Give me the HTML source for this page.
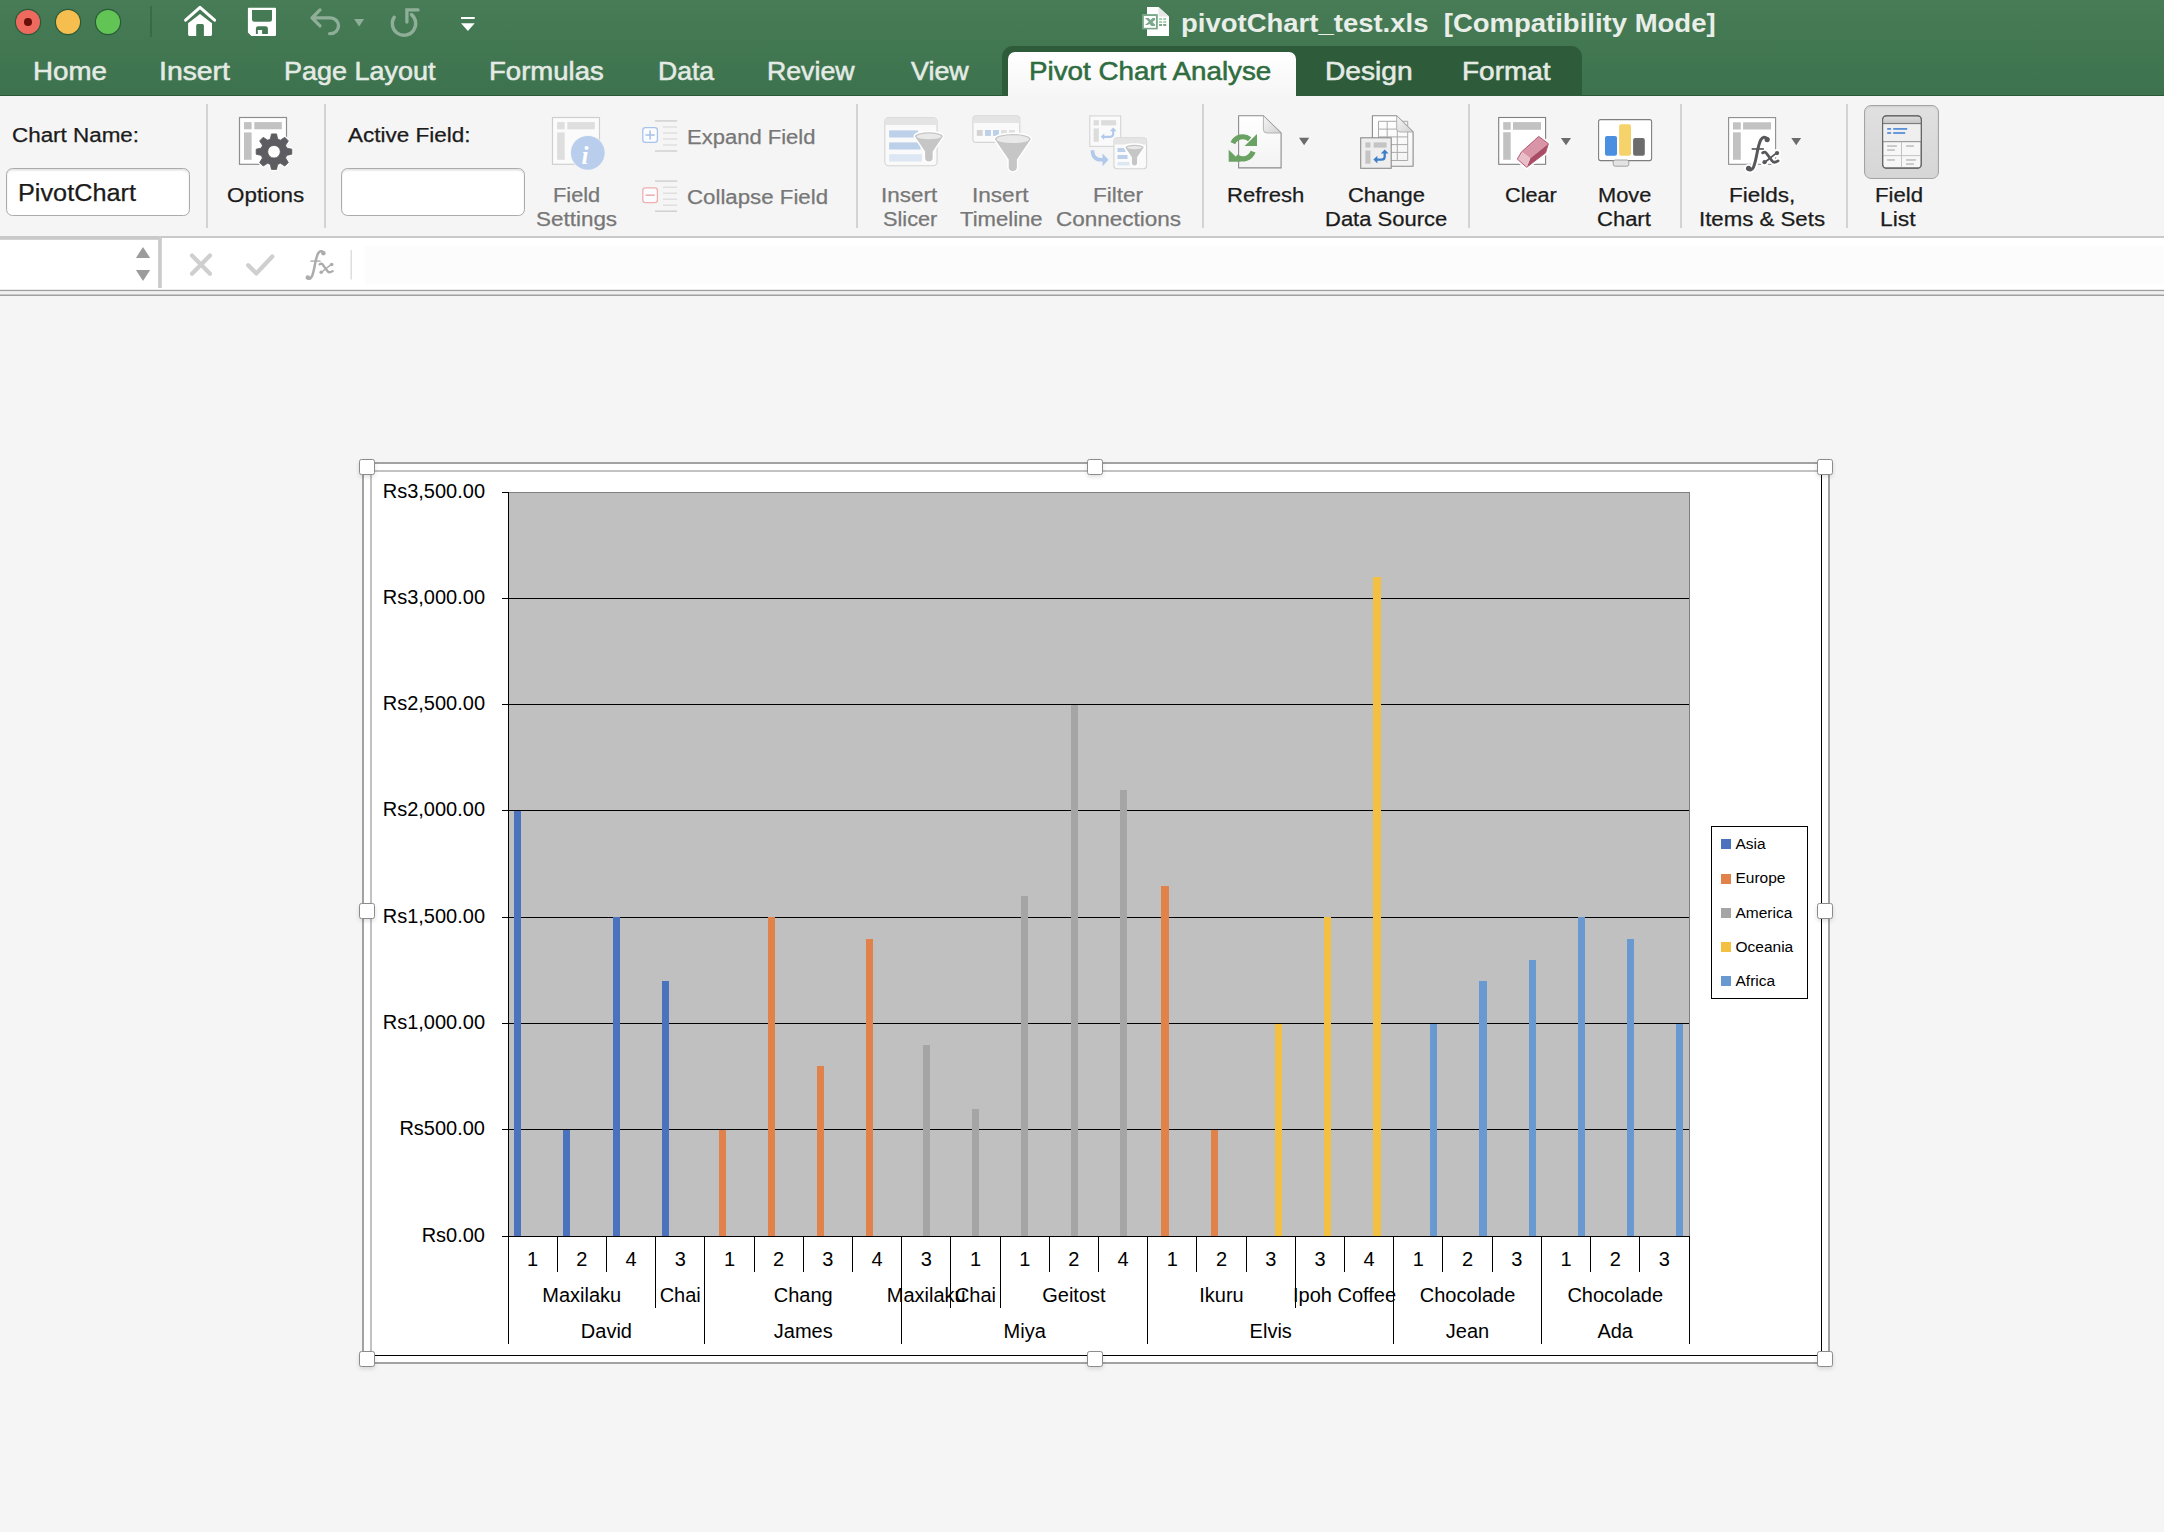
<!DOCTYPE html><html><head><meta charset="utf-8"><style>
*{margin:0;padding:0;box-sizing:border-box}
html,body{width:2164px;height:1532px;overflow:hidden;background:#f5f5f5;font-family:"Liberation Sans", sans-serif}
.a{position:absolute}
.t{position:absolute;white-space:pre;line-height:1;transform-origin:0 0}
.c{position:absolute;white-space:pre;line-height:20px;font-size:20px;color:#000;text-align:center}

</style></head><body>
<div class="a" style="left:0;top:0;width:2164px;height:96px;background:linear-gradient(#477c56,#3c724d)"></div>
<div class="a" style="left:0;top:95px;width:2164px;height:1.2px;background:#2b5837"></div>
<div class="a" style="left:15.5px;top:9.7px;width:24.6px;height:24.6px;border-radius:50%;background:#ee6a5f;box-shadow:0 0 0 1.2px rgba(25,70,40,0.6)"></div>
<div class="a" style="left:55.6px;top:9.7px;width:24.6px;height:24.6px;border-radius:50%;background:#f5be4f;box-shadow:0 0 0 1.2px rgba(25,70,40,0.6)"></div>
<div class="a" style="left:95.6px;top:9.7px;width:24.6px;height:24.6px;border-radius:50%;background:#61c454;box-shadow:0 0 0 1.2px rgba(25,70,40,0.6)"></div>
<div class="a" style="left:24px;top:18.2px;width:7.6px;height:7.6px;border-radius:50%;background:#6b0f0a"></div>
<svg class="a" style="left:0px;top:0px" width="520" height="45" viewBox="0 0 520 45">
<line x1="151" y1="6" x2="151" y2="37" stroke="rgba(20,50,30,0.35)" stroke-width="1.2"/>
<path d="M185.6,20.2 L200,7.4 L214.6,20.2" fill="none" stroke="#ffffff" stroke-width="3" stroke-linecap="round" stroke-linejoin="round"/>
<path d="M188.1,23.2 L200,13.9 L212,23.2 V34.6 Q212,35.9 210.7,35.9 H203.9 V25.6 Q203.9,24.1 202.4,24.1 H197.7 Q196.2,24.1 196.2,25.6 V35.9 H189.4 Q188.1,35.9 188.1,34.6 Z" fill="#ffffff"/>
<path d="M248.6,7.8 H275 Q276,7.8 276,8.8 V35 Q276,36 275,36 H251.4 L247.9,32.4 V8.8 Q247.9,7.8 248.6,7.8 Z M252,10.1 V19.4 Q252,21.7 254.3,21.7 H269.7 Q272,21.7 272,19.4 V10.1 Z M255.9,34 H257.8 V29.9 H262.1 V34 H267.9 V28.6 Q267.9,26.3 265.6,26.3 H258.2 Q255.9,26.3 255.9,28.6 Z" fill="#ffffff" fill-rule="evenodd"/>
<path d="M320,9.9 L312,17.9 L320,25.9 M312,17.9 H330.6 A7.9,7.9 0 0 1 330.6,33.7 H329.6" fill="none" stroke="rgba(255,255,255,0.40)" stroke-width="3.3" stroke-linecap="round" stroke-linejoin="round"/>
<path d="M354.1,19 H364.1 L359.1,26.5 Z" fill="rgba(255,255,255,0.40)"/>
<path d="M394.2,17.2 A11.7,11.7 0 1 0 411.5,14.6" fill="none" stroke="rgba(255,255,255,0.40)" stroke-width="3.4" stroke-linecap="round"/>
<path d="M406.9,22 V9.9 H418" fill="none" stroke="rgba(255,255,255,0.40)" stroke-width="3.3" stroke-linecap="round" stroke-linejoin="miter"/>
<rect x="461" y="17" width="13.7" height="2" fill="#ffffff"/>
<path d="M461,23.2 H474.7 L467.9,31.1 Z" fill="#ffffff"/>
</svg>
<svg class="a" style="left:1134px;top:2px" width="40" height="40" viewBox="1134 2 40 40">
<path d="M1147,7.1 H1158.5 L1169,16.6 V36 H1147 Z" fill="#ffffff"/>
<path d="M1158.5,7.1 V16.6 H1169" fill="#e6e6e6"/>
<rect x="1142.1" y="14.1" width="15.7" height="15.3" fill="#7aa88a"/>
<rect x="1143.9" y="16.0" width="12" height="11.8" fill="#ffffff"/>
<path d="M1145,18 H1148.5 L1150.5,20 L1152.5,18 H1155 V20 L1152.5,22 L1155,24.5 V26 H1151.5 L1149.5,24 L1147.5,25 H1145 L1148.8,21.8 Z" fill="#7aa88a"/>
<rect x="1159.1" y="18.2" width="3" height="1.6" fill="#8ec9a0"/>
<rect x="1163.2" y="18.2" width="3" height="1.6" fill="#8ec9a0"/>
<rect x="1159.1" y="21.2" width="3" height="1.6" fill="#8ec9a0"/>
<rect x="1163.2" y="21.2" width="3" height="1.6" fill="#8ec9a0"/>
<rect x="1159.1" y="24.2" width="3" height="1.6" fill="#5f8a6b"/>
<rect x="1163.2" y="24.2" width="3" height="1.6" fill="#5f8a6b"/>
</svg>
<div class="t" style="left:1180.54px;top:9.79px;font-size:26px;font-weight:bold;color:#e9eee9;transform:scaleX(1.0573);">pivotChart_test.xls  [Compatibility Mode]</div>
<div class="a" style="left:1002px;top:45.5px;width:580px;height:50.5px;background:#2e5b3a;border-radius:11px 11px 0 0"></div>
<div class="a" style="left:1008px;top:52px;width:288px;height:44px;background:linear-gradient(#ffffff,#f6f6f6);border-radius:7px 7px 0 0"></div>
<div class="t" style="left:32.87px;top:57.99px;font-size:26px;font-weight:normal;color:#e4ebe5;transform:scaleX(1.0659);-webkit-text-stroke:0.55px #e4ebe5;">Home</div>
<div class="t" style="left:159.22px;top:57.99px;font-size:26px;font-weight:normal;color:#e4ebe5;transform:scaleX(1.0909);-webkit-text-stroke:0.55px #e4ebe5;">Insert</div>
<div class="t" style="left:283.63px;top:57.99px;font-size:26px;font-weight:normal;color:#e4ebe5;transform:scaleX(1.0374);-webkit-text-stroke:0.55px #e4ebe5;">Page Layout</div>
<div class="t" style="left:488.68px;top:57.99px;font-size:26px;font-weight:normal;color:#e4ebe5;transform:scaleX(1.0597);-webkit-text-stroke:0.55px #e4ebe5;">Formulas</div>
<div class="t" style="left:657.76px;top:57.99px;font-size:26px;font-weight:normal;color:#e4ebe5;transform:scaleX(1.0213);-webkit-text-stroke:0.55px #e4ebe5;">Data</div>
<div class="t" style="left:767.25px;top:57.99px;font-size:26px;font-weight:normal;color:#e4ebe5;transform:scaleX(1.0267);-webkit-text-stroke:0.55px #e4ebe5;">Review</div>
<div class="t" style="left:910.90px;top:57.99px;font-size:26px;font-weight:normal;color:#e4ebe5;transform:scaleX(1.0337);-webkit-text-stroke:0.55px #e4ebe5;">View</div>
<div class="t" style="left:1028.86px;top:57.99px;font-size:26px;font-weight:normal;color:#2f6d40;transform:scaleX(1.0679);-webkit-text-stroke:0.55px #2f6d40;">Pivot Chart Analyse</div>
<div class="t" style="left:1324.83px;top:57.99px;font-size:26px;font-weight:normal;color:#e4ebe5;transform:scaleX(1.0830);-webkit-text-stroke:0.55px #e4ebe5;">Design</div>
<div class="t" style="left:1462.25px;top:57.99px;font-size:26px;font-weight:normal;color:#e4ebe5;transform:scaleX(1.0762);-webkit-text-stroke:0.55px #e4ebe5;">Format</div>
<div class="a" style="left:0;top:96px;width:2164px;height:140px;background:#f5f5f5"></div>
<div class="a" style="left:0;top:236px;width:2164px;height:2px;background:#c9c9c9"></div>
<div class="a" style="left:206px;top:104px;width:2px;height:124px;background:#d3d3d3"></div>
<div class="a" style="left:324px;top:104px;width:2px;height:124px;background:#d3d3d3"></div>
<div class="a" style="left:856px;top:104px;width:2px;height:124px;background:#d3d3d3"></div>
<div class="a" style="left:1202px;top:104px;width:2px;height:124px;background:#d3d3d3"></div>
<div class="a" style="left:1468px;top:104px;width:2px;height:124px;background:#d3d3d3"></div>
<div class="a" style="left:1680px;top:104px;width:2px;height:124px;background:#d3d3d3"></div>
<div class="a" style="left:1846px;top:104px;width:2px;height:124px;background:#d3d3d3"></div>
<div class="a" style="left:6px;top:168px;width:184px;height:48px;background:#fff;border:1.8px solid #ababab;border-radius:6.5px;box-shadow:inset 0 1.5px 2px rgba(0,0,0,0.12)"></div>
<div class="a" style="left:341px;top:168px;width:184px;height:48px;background:#fff;border:1.8px solid #ababab;border-radius:6.5px;box-shadow:inset 0 1.5px 2px rgba(0,0,0,0.12)"></div>
<div class="a" style="left:1863.5px;top:104.5px;width:75px;height:74.7px;background:linear-gradient(#e0e0e0,#d6d6d6);border:1.6px solid #a4a4a4;border-radius:7px;box-shadow:inset 0 1px 2px rgba(0,0,0,0.08)"></div>
<svg class="a" style="left:0px;top:0px" width="2164" height="240" viewBox="0 0 2164 240">
<rect x="239.5" y="117.5" width="47" height="46.8" fill="#ffffff" stroke="#8e8e8e" stroke-width="1.2"/>
<rect x="244" y="122.1" width="7.6" height="7.2" fill="#c2c2c2"/><rect x="254.3" y="122.1" width="27.5" height="7.2" fill="#c2c2c2"/><rect x="244" y="132.4" width="7.6" height="27.4" fill="#c2c2c2"/>
<path d="M270.32,139.02 L271.46,133.88 L276.54,133.88 L277.68,139.02 L280.36,140.13 L284.81,137.31 L288.39,140.89 L285.57,145.34 L286.68,148.02 L291.82,149.16 L291.82,154.24 L286.68,155.38 L285.57,158.06 L288.39,162.51 L284.81,166.09 L280.36,163.27 L277.68,164.38 L276.54,169.52 L271.46,169.52 L270.32,164.38 L267.64,163.27 L263.19,166.09 L259.61,162.51 L262.43,158.06 L261.32,155.38 L256.18,154.24 L256.18,149.16 L261.32,148.02 L262.43,145.34 L259.61,140.89 L263.19,137.31 L267.64,140.13 Z" fill="#ffffff" stroke="#ffffff" stroke-width="3" stroke-linejoin="round"/>
<path d="M270.32,139.02 L271.46,133.88 L276.54,133.88 L277.68,139.02 L280.36,140.13 L284.81,137.31 L288.39,140.89 L285.57,145.34 L286.68,148.02 L291.82,149.16 L291.82,154.24 L286.68,155.38 L285.57,158.06 L288.39,162.51 L284.81,166.09 L280.36,163.27 L277.68,164.38 L276.54,169.52 L271.46,169.52 L270.32,164.38 L267.64,163.27 L263.19,166.09 L259.61,162.51 L262.43,158.06 L261.32,155.38 L256.18,154.24 L256.18,149.16 L261.32,148.02 L262.43,145.34 L259.61,140.89 L263.19,137.31 L267.64,140.13 Z M280.30,151.70 A6.3,6.3 0 1 0 267.70,151.70 A6.3,6.3 0 1 0 280.30,151.70 Z" fill="#5c5c61" fill-rule="evenodd" stroke="#5c5c61" stroke-width="0.8" stroke-linejoin="round"/>
<rect x="552.5" y="117.5" width="47" height="46.8" fill="#fbfbfb" stroke="#cfcfcf" stroke-width="1.2"/>
<rect x="557.1" y="122.1" width="7.6" height="7.2" fill="#dedede"/><rect x="567.3" y="122.1" width="27.5" height="7.2" fill="#dedede"/><rect x="557.1" y="132.4" width="7.6" height="27.4" fill="#dedede"/>
<circle cx="587.8" cy="152.8" r="17.6" fill="#f5f5f5"/><circle cx="587.8" cy="152.8" r="16.9" fill="#b9ceec"/>
<text x="581.5" y="163.5" font-family="Liberation Serif" font-style="italic" font-weight="bold" font-size="25" fill="#ffffff">i</text>
<rect x="642.8" y="127.6" width="14.6" height="14.8" rx="2.6" fill="#fbfcff" stroke="#a8c3ea" stroke-width="1.3"/>
<line x1="645.5" y1="135.0" x2="654.7" y2="135.0" stroke="#a8c3ea" stroke-width="1.6"/>
<line x1="650.1" y1="130.4" x2="650.1" y2="139.6" stroke="#a8c3ea" stroke-width="1.6"/>
<line x1="655" y1="120.9" x2="677.1" y2="120.9" stroke="#d0d0d0" stroke-width="1.5"/>
<line x1="655" y1="151.0" x2="677.1" y2="151.0" stroke="#d0d0d0" stroke-width="1.5"/>
<line x1="663" y1="127.0" x2="677.1" y2="127.0" stroke="#dadada" stroke-width="1.2"/>
<line x1="663" y1="133.0" x2="677.1" y2="133.0" stroke="#dadada" stroke-width="1.2"/>
<line x1="663" y1="139.0" x2="677.1" y2="139.0" stroke="#dadada" stroke-width="1.2"/>
<line x1="663" y1="145.0" x2="677.1" y2="145.0" stroke="#dadada" stroke-width="1.2"/>
<rect x="642.8" y="187.8" width="14.6" height="14.8" rx="2.6" fill="#fbfcff" stroke="#efb0b0" stroke-width="1.3"/>
<line x1="645.5" y1="195.2" x2="654.7" y2="195.2" stroke="#efb0b0" stroke-width="1.6"/>
<line x1="655" y1="181.1" x2="677.1" y2="181.1" stroke="#d0d0d0" stroke-width="1.5"/>
<line x1="655" y1="211.2" x2="677.1" y2="211.2" stroke="#d0d0d0" stroke-width="1.5"/>
<line x1="663" y1="187.2" x2="677.1" y2="187.2" stroke="#dadada" stroke-width="1.2"/>
<line x1="663" y1="193.2" x2="677.1" y2="193.2" stroke="#dadada" stroke-width="1.2"/>
<line x1="663" y1="199.2" x2="677.1" y2="199.2" stroke="#dadada" stroke-width="1.2"/>
<line x1="663" y1="205.2" x2="677.1" y2="205.2" stroke="#dadada" stroke-width="1.2"/>
<rect x="884.8" y="117.5" width="52.3" height="48.3" rx="4" fill="#fafafa" stroke="#d4d4d4" stroke-width="1.1"/>
<path d="M884.8,125 V121.5 Q884.8,117.5 888.8,117.5 H933.1 Q937.1,117.5 937.1,121.5 V125 Z" fill="#e4e4e4"/>
<rect x="889.1" y="130.4" width="29" height="7.1" fill="#bcd0ea"/><rect x="889.1" y="142.4" width="31.5" height="7.1" fill="#bcd0ea"/><rect x="889.1" y="154.2" width="32.7" height="7.3" fill="#dde7f4"/>
<path d="M915.00,136.40 A13.9,4.1 0 0 1 942.80,136.40 L932.70,151.50 V157.70 A3.8,3.8 0 0 1 925.10,157.70 V151.50 Z" fill="#ffffff" stroke="#ffffff" stroke-width="3"/><path d="M915.00,136.40 A13.9,4.1 0 0 1 942.80,136.40 L932.70,151.50 V157.70 A3.8,3.8 0 0 1 925.10,157.70 V151.50 Z" fill="#c6c6c6"/><ellipse cx="928.90" cy="136.40" rx="12.30" ry="2.80" fill="#e9e9e9"/>
<rect x="972.9" y="115.9" width="46.9" height="26.5" rx="3.5" fill="#fafafa" stroke="#d4d4d4" stroke-width="1.1"/>
<path d="M972.9,123 V119.4 Q972.9,115.9 976.4,115.9 H1016.3 Q1019.8,115.9 1019.8,119.4 V123 Z" fill="#e4e4e4"/>
<rect x="976.8" y="130" width="5.9" height="5.9" fill="#d4d4d4"/>
<rect x="985" y="130" width="5.9" height="5.9" fill="#bcd0ea"/>
<rect x="993" y="130" width="5.9" height="5.9" fill="#bcd0ea"/>
<rect x="1001" y="130" width="5.9" height="5.9" fill="#e0e0e0"/>
<rect x="1009" y="130" width="5.9" height="5.9" fill="#e0e0e0"/>
<path d="M994.90,139.20 A17.9,5.2 0 0 1 1030.70,139.20 L1016.90,159.50 V167.10 A4.1,4.1 0 0 1 1008.70,167.10 V159.50 Z" fill="#ffffff" stroke="#ffffff" stroke-width="3"/><path d="M994.90,139.20 A17.9,5.2 0 0 1 1030.70,139.20 L1016.90,159.50 V167.10 A4.1,4.1 0 0 1 1008.70,167.10 V159.50 Z" fill="#c6c6c6"/><ellipse cx="1012.80" cy="139.20" rx="16.30" ry="3.90" fill="#e9e9e9"/>
<rect x="1089.8" y="115.9" width="30.9" height="30.5" fill="#fafafa" stroke="#d4d4d4" stroke-width="1.1"/>
<rect x="1093.6" y="120.2" width="5.2" height="5.2" fill="#dcdcdc"/><rect x="1101.2" y="120.2" width="15" height="5.2" fill="#dcdcdc"/><rect x="1093.6" y="128.4" width="5.2" height="13.4" fill="#dcdcdc"/>
<path d="M1103.5,136.8 H1110.2 Q1113.2,136.8 1113.2,133.8 V130.5" fill="none" stroke="#b1c9ea" stroke-width="2.2"/><path d="M1109.8,131.2 L1113.2,127.6 L1116.6,131.2 Z" fill="#b1c9ea"/><path d="M1104.2,133.6 L1100.8,136.8 L1104.2,140 Z" fill="#b1c9ea"/>
<rect x="1113.9" y="137.7" width="32.7" height="31" rx="3" fill="#fafafa" stroke="#d4d4d4" stroke-width="1.1"/>
<path d="M1113.9,144.5 V140.7 Q1113.9,137.7 1116.9,137.7 H1143.6 Q1146.6,137.7 1146.6,140.7 V144.5 Z" fill="#e4e4e4"/>
<rect x="1117.5" y="148" width="8" height="4" fill="#bcd0ea"/><rect x="1117.5" y="155" width="10" height="4" fill="#bcd0ea"/><rect x="1117.5" y="162" width="12" height="3.5" fill="#dde7f4"/>
<path d="M1125.30,147.60 A9.2,2.9 0 0 1 1143.70,147.60 L1137.10,157.30 V162.80 A2.6,2.6 0 0 1 1131.90,162.80 V157.30 Z" fill="#ffffff" stroke="#ffffff" stroke-width="3"/><path d="M1125.30,147.60 A9.2,2.9 0 0 1 1143.70,147.60 L1137.10,157.30 V162.80 A2.6,2.6 0 0 1 1131.90,162.80 V157.30 Z" fill="#c6c6c6"/><ellipse cx="1134.50" cy="147.60" rx="7.60" ry="1.60" fill="#e9e9e9"/>
<path d="M1092.5,150.2 Q1092.5,159.8 1101.5,159.8 H1103" fill="none" stroke="#b1c9ea" stroke-width="3.6"/><path d="M1102.5,153.6 L1108.5,159.8 L1102.5,166.2 Z" fill="#b1c9ea"/>
<defs><linearGradient id="pg" x1="0" y1="0" x2="0" y2="1"><stop offset="0" stop-color="#ffffff"/><stop offset="1" stop-color="#f3f3f3"/></linearGradient><linearGradient id="fd" x1="0" y1="0" x2="1" y2="1"><stop offset="0" stop-color="#f6f6f6"/><stop offset="1" stop-color="#d2d2d2"/></linearGradient></defs>
<path d="M1238.6,115.8 H1263.4 L1281.1,133 V167.9 H1238.6 Z" fill="url(#pg)" stroke="#8b8b8b" stroke-width="1.1" stroke-linejoin="round"/>
<path d="M1263.4,115.8 V129.5 Q1263.4,133 1266.9,133 H1281.1 Z" fill="url(#fd)" stroke="#a3a3a3" stroke-width="0.8"/>
<path d="M1232.8,143.2 A11,11 0 0 1 1249.7,139.2" fill="none" stroke="#6aa263" stroke-width="5.2"/>
<path d="M1257,133.9 V146 H1244.6 Z" fill="#6aa263"/>
<path d="M1253.1,151.6 A11,11 0 0 1 1236.0,156.5" fill="none" stroke="#6aa263" stroke-width="5.2"/>
<path d="M1228.7,149.8 V161.8 H1241.1 Z" fill="#6aa263"/>
<path d="M1299,137.8 H1309.2 L1304.1,145.3 Z" fill="#6b6b6b"/>
<path d="M1372.4,115.8 H1396.7 L1413.1,132 V166.2 H1372.4 Z" fill="url(#pg)" stroke="#8b8b8b" stroke-width="1.1" stroke-linejoin="round"/>
<line x1="1378.5" y1="121.3" x2="1378.5" y2="160.5" stroke="#ababab" stroke-width="1"/>
<line x1="1387.2" y1="121.3" x2="1387.2" y2="160.5" stroke="#ababab" stroke-width="1"/>
<line x1="1397.3" y1="121.3" x2="1397.3" y2="160.5" stroke="#ababab" stroke-width="1"/>
<line x1="1407.7" y1="121.3" x2="1407.7" y2="160.5" stroke="#ababab" stroke-width="1"/>
<line x1="1378.5" y1="121.3" x2="1407.7" y2="121.3" stroke="#ababab" stroke-width="1"/>
<line x1="1378.5" y1="129.1" x2="1407.7" y2="129.1" stroke="#ababab" stroke-width="1"/>
<line x1="1378.5" y1="136.9" x2="1407.7" y2="136.9" stroke="#ababab" stroke-width="1"/>
<line x1="1378.5" y1="144.6" x2="1407.7" y2="144.6" stroke="#ababab" stroke-width="1"/>
<line x1="1378.5" y1="152.4" x2="1407.7" y2="152.4" stroke="#ababab" stroke-width="1"/>
<line x1="1378.5" y1="160.5" x2="1407.7" y2="160.5" stroke="#ababab" stroke-width="1"/>
<path d="M1396.7,115.8 V128.6 Q1396.7,132 1400.1,132 H1413.1 Z" fill="url(#fd)" stroke="#a3a3a3" stroke-width="0.8"/>
<rect x="1360.7" y="137.8" width="30.5" height="30.5" fill="#eeeeee" stroke="#8b8b8b" stroke-width="1.1"/>
<rect x="1365.4" y="142.4" width="5.1" height="5.2" fill="#c4c4c4"/><rect x="1373.6" y="142.4" width="13" height="5.2" fill="#c4c4c4"/><rect x="1365.4" y="150.5" width="5.1" height="13.2" fill="#c4c4c4"/>
<path d="M1376.5,159.6 H1381.6 Q1384.7,159.6 1384.7,156.5 V152.5" fill="none" stroke="#3d7ec8" stroke-width="2.3"/><path d="M1380.8,153.4 L1384.7,149.4 L1388.6,153.4 Z" fill="#3d7ec8"/><path d="M1377.4,155.7 L1373.4,159.6 L1377.4,163.5 Z" fill="#3d7ec8"/>
<rect x="1498.7" y="117.5" width="46.9" height="46.8" fill="#ffffff" stroke="#7f7f7f" stroke-width="1.1"/>
<rect x="1503.2" y="122.1" width="7.5" height="7.7" fill="#c2c2c2"/><rect x="1513" y="122.1" width="28" height="7.7" fill="#c2c2c2"/><rect x="1503.2" y="132.2" width="7.5" height="27.6" fill="#c2c2c2"/>
<path d="M1538.7,136.4 L1548.4,143.7 L1545.6,152.8 L1526.7,167.3 L1517.3,159.1 L1521.5,151.9 Z" fill="#ffffff" stroke="#ffffff" stroke-width="4.5" stroke-linejoin="round" opacity="0.9"/>
<path d="M1538.7,136.4 L1548.4,143.7 L1530.3,158.2 L1521.5,151.9 Z" fill="#d995a7"/>
<path d="M1548.4,143.7 L1545.6,152.8 L1526.7,167.3 L1530.3,158.2 Z" fill="#a94c64"/>
<path d="M1521.5,151.9 L1530.3,158.2 L1526.7,167.3 L1517.3,159.1 Z" fill="#e8bfc9"/>
<path d="M1538.7,136.4 L1548.4,143.7 L1545.6,152.8 L1526.7,167.3 L1517.3,159.1 L1521.5,151.9 Z" fill="none" stroke="#b35a72" stroke-width="1" stroke-linejoin="round"/>
<path d="M1560.9,137.9 H1571 L1566,145.2 Z" fill="#6b6b6b"/>
<rect x="1598.6" y="119.6" width="53" height="41" rx="2" fill="#ffffff" stroke="#7f7f7f" stroke-width="1.1"/>
<rect x="1613.2" y="160" width="15.6" height="6.2" rx="2" fill="#e3e3e3" stroke="#9a9a9a" stroke-width="0.9"/>
<rect x="1605" y="136.1" width="12" height="19.7" rx="2" fill="#4a8fe0"/><rect x="1619.1" y="124.2" width="11.9" height="31.6" rx="2" fill="#f6d36a"/><rect x="1633.1" y="138" width="11.7" height="17.8" rx="2" fill="#6c6c6c"/>
<rect x="1728.6" y="117.6" width="47" height="46.7" fill="#ffffff" stroke="#8e8e8e" stroke-width="1.1"/>
<rect x="1733" y="122.3" width="7.8" height="7.2" fill="#c2c2c2"/><rect x="1743.1" y="122.3" width="27.9" height="7.2" fill="#c2c2c2"/><rect x="1733" y="132.3" width="7.8" height="27.5" fill="#c2c2c2"/>
<g transform="translate(1745.5,136.0) scale(1.19)"><path d="M2.0,27.6 Q4.6,30.2 6.8,26 Q8.2,22.6 9.6,15 Q11.2,6.4 13,3 Q15.2,-0.4 18.4,2.2" fill="none" stroke="#ffffff" stroke-width="5.5" stroke-linecap="round"/><circle cx="2.6" cy="27.2" r="3.7" fill="#ffffff"/><circle cx="18.2" cy="3.0" r="3.7" fill="#ffffff"/><path d="M5.2,10.9 H15.4" stroke="#ffffff" stroke-width="4.4"/><path d="M14.4,14.2 Q16.4,12.6 17.8,14.8 L22.4,21 Q24,23.2 27.4,20.9" fill="none" stroke="#ffffff" stroke-width="5.3" stroke-linecap="round"/><path d="M26.4,14.0 L16.0,22.3" stroke="#ffffff" stroke-width="4.5" stroke-linecap="round"/><circle cx="26.5" cy="14.3" r="3.3" fill="#ffffff"/><circle cx="16.0" cy="22.0" r="3.3" fill="#ffffff"/><path d="M2.0,27.6 Q4.6,30.2 6.8,26 Q8.2,22.6 9.6,15 Q11.2,6.4 13,3 Q15.2,-0.4 18.4,2.2" fill="none" stroke="#58585c" stroke-width="2.5" stroke-linecap="round"/><circle cx="2.6" cy="27.2" r="2.2" fill="#58585c"/><circle cx="18.2" cy="3.0" r="2.2" fill="#58585c"/><path d="M5.2,10.9 H15.4" stroke="#58585c" stroke-width="1.4"/><path d="M14.4,14.2 Q16.4,12.6 17.8,14.8 L22.4,21 Q24,23.2 27.4,20.9" fill="none" stroke="#58585c" stroke-width="2.3" stroke-linecap="round"/><path d="M26.4,14.0 L16.0,22.3" stroke="#58585c" stroke-width="1.5" stroke-linecap="round"/><circle cx="26.5" cy="14.3" r="1.8" fill="#58585c"/><circle cx="16.0" cy="22.0" r="1.8" fill="#58585c"/></g>
<path d="M1791.3,137.9 H1801.1 L1796.2,145.3 Z" fill="#6b6b6b"/>
<rect x="1882.6" y="115.8" width="38.7" height="52.4" rx="4" fill="#f7f7f7" stroke="#676767" stroke-width="1.2"/>
<defs><linearGradient id="hd" x1="0" y1="0" x2="0" y2="1"><stop offset="0" stop-color="#dcdcdc"/><stop offset="1" stop-color="#c4c4c4"/></linearGradient></defs>
<path d="M1883.2,123.6 V119.8 Q1883.2,116.4 1886.6,116.4 H1917.3 Q1920.7,116.4 1920.7,119.8 V123.6 Z" fill="url(#hd)"/>
<rect x="1883.2" y="123.6" width="37.5" height="18" fill="#efefef"/>
<line x1="1883" y1="123.6" x2="1921" y2="123.6" stroke="#707070" stroke-width="1"/>
<line x1="1883" y1="141.7" x2="1921" y2="141.7" stroke="#8a8a8a" stroke-width="1"/><line x1="1883" y1="155.6" x2="1921" y2="155.6" stroke="#bdbdbd" stroke-width="0.9"/><line x1="1901.5" y1="141.7" x2="1901.5" y2="168" stroke="#bdbdbd" stroke-width="0.9"/>
<rect x="1882.6" y="115.8" width="38.7" height="52.4" rx="4" fill="none" stroke="#676767" stroke-width="1.2"/>
<rect x="1887.2" y="128" width="3.9" height="1.8" fill="#5b8fd6"/><rect x="1893.2" y="128" width="14" height="1.8" fill="#5b8fd6"/><rect x="1887.2" y="132.1" width="3.9" height="1.8" fill="#5b8fd6"/><rect x="1893.2" y="132.1" width="12" height="1.8" fill="#5b8fd6"/>
<rect x="1887.1" y="145.2" width="9.8" height="1.7" fill="#c2c2c2"/><rect x="1887.1" y="149.2" width="7.8" height="1.7" fill="#c2c2c2"/><rect x="1906.1" y="145.2" width="7.8" height="1.7" fill="#c2c2c2"/>
<rect x="1887.1" y="159.1" width="7.8" height="1.7" fill="#c2c2c2"/><rect x="1906.1" y="159.1" width="9.8" height="1.7" fill="#c2c2c2"/><rect x="1906.1" y="163.2" width="7.8" height="1.7" fill="#c2c2c2"/>
</svg>
<div class="t" style="left:11.88px;top:124.57px;font-size:20px;font-weight:normal;color:#1b1b1b;transform:scaleX(1.1208);-webkit-text-stroke:0.25px #1b1b1b;">Chart Name:</div>
<div class="t" style="left:17.90px;top:182.23px;font-size:23px;font-weight:normal;color:#1b1b1b;transform:scaleX(1.0983);-webkit-text-stroke:0.25px #1b1b1b;">PivotChart</div>
<div class="t" style="left:226.70px;top:184.57px;font-size:20px;font-weight:normal;color:#1b1b1b;transform:scaleX(1.1200);-webkit-text-stroke:0.25px #1b1b1b;">Options</div>
<div class="t" style="left:347.90px;top:124.57px;font-size:20px;font-weight:normal;color:#1b1b1b;transform:scaleX(1.1251);-webkit-text-stroke:0.25px #1b1b1b;">Active Field:</div>
<div class="t" style="left:552.91px;top:184.77px;font-size:20px;font-weight:normal;color:#777777;transform:scaleX(1.0891);-webkit-text-stroke:0.25px #777777;">Field</div>
<div class="t" style="left:536.00px;top:208.67px;font-size:20px;font-weight:normal;color:#777777;transform:scaleX(1.1222);-webkit-text-stroke:0.25px #777777;">Settings</div>
<div class="t" style="left:687.10px;top:127.17px;font-size:20px;font-weight:normal;color:#777777;transform:scaleX(1.1002);-webkit-text-stroke:0.25px #777777;">Expand Field</div>
<div class="t" style="left:687.09px;top:187.07px;font-size:20px;font-weight:normal;color:#777777;transform:scaleX(1.1131);-webkit-text-stroke:0.25px #777777;">Collapse Field</div>
<div class="t" style="left:880.68px;top:184.87px;font-size:20px;font-weight:normal;color:#777777;transform:scaleX(1.1221);-webkit-text-stroke:0.25px #777777;">Insert</div>
<div class="t" style="left:882.60px;top:208.57px;font-size:20px;font-weight:normal;color:#777777;transform:scaleX(1.0864);-webkit-text-stroke:0.25px #777777;">Slicer</div>
<div class="t" style="left:972.07px;top:184.87px;font-size:20px;font-weight:normal;color:#777777;transform:scaleX(1.1281);-webkit-text-stroke:0.25px #777777;">Insert</div>
<div class="t" style="left:960.30px;top:208.57px;font-size:20px;font-weight:normal;color:#777777;transform:scaleX(1.1043);-webkit-text-stroke:0.25px #777777;">Timeline</div>
<div class="t" style="left:1093.37px;top:184.87px;font-size:20px;font-weight:normal;color:#777777;transform:scaleX(1.1260);-webkit-text-stroke:0.25px #777777;">Filter</div>
<div class="t" style="left:1055.87px;top:208.57px;font-size:20px;font-weight:normal;color:#777777;transform:scaleX(1.1254);-webkit-text-stroke:0.25px #777777;">Connections</div>
<div class="t" style="left:1227.10px;top:184.87px;font-size:20px;font-weight:normal;color:#1b1b1b;transform:scaleX(1.1030);-webkit-text-stroke:0.25px #1b1b1b;">Refresh</div>
<div class="t" style="left:1347.70px;top:184.87px;font-size:20px;font-weight:normal;color:#1b1b1b;transform:scaleX(1.0981);-webkit-text-stroke:0.25px #1b1b1b;">Change</div>
<div class="t" style="left:1325.00px;top:208.57px;font-size:20px;font-weight:normal;color:#1b1b1b;transform:scaleX(1.0995);-webkit-text-stroke:0.25px #1b1b1b;">Data Source</div>
<div class="t" style="left:1504.82px;top:184.87px;font-size:20px;font-weight:normal;color:#1b1b1b;transform:scaleX(1.0820);-webkit-text-stroke:0.25px #1b1b1b;">Clear</div>
<div class="t" style="left:1597.51px;top:184.87px;font-size:20px;font-weight:normal;color:#1b1b1b;transform:scaleX(1.0903);-webkit-text-stroke:0.25px #1b1b1b;">Move</div>
<div class="t" style="left:1596.90px;top:208.57px;font-size:20px;font-weight:normal;color:#1b1b1b;transform:scaleX(1.1003);-webkit-text-stroke:0.25px #1b1b1b;">Chart</div>
<div class="t" style="left:1729.37px;top:184.77px;font-size:20px;font-weight:normal;color:#1b1b1b;transform:scaleX(1.1251);-webkit-text-stroke:0.25px #1b1b1b;">Fields,</div>
<div class="t" style="left:1698.89px;top:208.57px;font-size:20px;font-weight:normal;color:#1b1b1b;transform:scaleX(1.1115);-webkit-text-stroke:0.25px #1b1b1b;">Items &amp; Sets</div>
<div class="t" style="left:1874.89px;top:184.77px;font-size:20px;font-weight:normal;color:#1b1b1b;transform:scaleX(1.1085);-webkit-text-stroke:0.25px #1b1b1b;">Field</div>
<div class="t" style="left:1880.06px;top:208.57px;font-size:20px;font-weight:normal;color:#1b1b1b;transform:scaleX(1.1418);-webkit-text-stroke:0.25px #1b1b1b;">List</div>
<div class="a" style="left:0;top:238px;width:2164px;height:52px;background:#fff"></div>
<svg class="a" style="left:0px;top:236px" width="2164" height="60" viewBox="0 236 2164 60">
<rect x="0" y="236" width="161.8" height="3.8" fill="#c9c9c9"/>
<rect x="158.1" y="236" width="3.7" height="52" fill="#cbcbcb"/>
<path d="M135.9,257.9 H150.1 L143,247.1 Z" fill="#9b9b9b"/><path d="M135.9,270.1 H150.1 L143,280.9 Z" fill="#9b9b9b"/>
<path d="M192,255.5 L210,273.8 M210,255.5 L192,273.8" stroke="#cfcfcf" stroke-width="4.2" stroke-linecap="round"/>
<path d="M248.2,265.2 L256.4,273.4 L272.3,256.5" fill="none" stroke="#cfcfcf" stroke-width="4.3" stroke-linecap="round" stroke-linejoin="round"/>
<g transform="translate(305.2,250.2) scale(1.0)"><path d="M2.0,27.6 Q4.6,30.2 6.8,26 Q8.2,22.6 9.6,15 Q11.2,6.4 13,3 Q15.2,-0.4 18.4,2.2" fill="none" stroke="#acacac" stroke-width="2.5" stroke-linecap="round"/><circle cx="2.6" cy="27.2" r="2.2" fill="#acacac"/><circle cx="18.2" cy="3.0" r="2.2" fill="#acacac"/><path d="M5.2,10.9 H15.4" stroke="#acacac" stroke-width="1.4"/><path d="M14.4,14.2 Q16.4,12.6 17.8,14.8 L22.4,21 Q24,23.2 27.4,20.9" fill="none" stroke="#acacac" stroke-width="2.3" stroke-linecap="round"/><path d="M26.4,14.0 L16.0,22.3" stroke="#acacac" stroke-width="1.5" stroke-linecap="round"/><circle cx="26.5" cy="14.3" r="1.8" fill="#acacac"/><circle cx="16.0" cy="22.0" r="1.8" fill="#acacac"/></g>
<line x1="351.2" y1="250" x2="351.2" y2="279.5" stroke="#d6d6d6" stroke-width="1.2"/>
<rect x="365" y="246" width="1799" height="38" fill="#fcfcfc"/>
<rect x="0" y="289.8" width="2164" height="1.5" fill="#9e9e9e"/>
<rect x="0" y="291.3" width="2164" height="3.2" fill="#f0f0f0"/>
<rect x="0" y="294.5" width="2164" height="1.6" fill="#a0a0a0"/>
</svg>
<div class="a" style="left:362px;top:462px;width:1468px;height:902px;border:2px solid #a2a2a2;background:#fff"></div>
<div class="a" style="left:370px;top:470px;width:1452px;height:886px;border-left:2px solid #c2c2c2;border-top:2px solid #c2c2c2;border-right:1.5px solid #000;border-bottom:1.5px solid #000;background:#fff"></div>
<div class="a" style="left:508.00px;top:491.50px;width:1181.5px;height:745px;background:#c0c0c0;border-top:1.5px solid #808080;border-right:1.5px solid #808080"></div>
<div class="a" style="left:502.00px;top:1129.00px;width:1187.00px;height:1.00px;background:#000"></div>
<div class="a" style="left:502.00px;top:1023.00px;width:1187.00px;height:1.00px;background:#000"></div>
<div class="a" style="left:502.00px;top:917.00px;width:1187.00px;height:1.00px;background:#000"></div>
<div class="a" style="left:502.00px;top:810.00px;width:1187.00px;height:1.00px;background:#000"></div>
<div class="a" style="left:502.00px;top:704.00px;width:1187.00px;height:1.00px;background:#000"></div>
<div class="a" style="left:502.00px;top:598.00px;width:1187.00px;height:1.00px;background:#000"></div>
<div class="a" style="left:502.00px;top:492.00px;width:7.00px;height:1.00px;background:#000"></div>
<div class="c" style="left:285px;top:1224.97px;width:200px;text-align:right">Rs0.00</div>
<div class="c" style="left:285px;top:1117.97px;width:200px;text-align:right">Rs500.00</div>
<div class="c" style="left:285px;top:1011.97px;width:200px;text-align:right">Rs1,000.00</div>
<div class="c" style="left:285px;top:905.97px;width:200px;text-align:right">Rs1,500.00</div>
<div class="c" style="left:285px;top:798.97px;width:200px;text-align:right">Rs2,000.00</div>
<div class="c" style="left:285px;top:692.97px;width:200px;text-align:right">Rs2,500.00</div>
<div class="c" style="left:285px;top:586.97px;width:200px;text-align:right">Rs3,000.00</div>
<div class="c" style="left:285px;top:480.97px;width:200px;text-align:right">Rs3,500.00</div>
<div class="a" style="left:514.18px;top:811.07px;width:7.1px;height:425.43px;background:#4b72bd"></div>
<div class="a" style="left:563.39px;top:1130.14px;width:7.1px;height:106.36px;background:#4b72bd"></div>
<div class="a" style="left:612.59px;top:917.43px;width:7.1px;height:319.07px;background:#4b72bd"></div>
<div class="a" style="left:661.80px;top:981.24px;width:7.1px;height:255.26px;background:#4b72bd"></div>
<div class="a" style="left:718.58px;top:1130.14px;width:7.1px;height:106.36px;background:#e0824a"></div>
<div class="a" style="left:767.79px;top:917.43px;width:7.1px;height:319.07px;background:#e0824a"></div>
<div class="a" style="left:817.00px;top:1066.33px;width:7.1px;height:170.17px;background:#e0824a"></div>
<div class="a" style="left:866.21px;top:938.70px;width:7.1px;height:297.80px;background:#e0824a"></div>
<div class="a" style="left:922.99px;top:1045.06px;width:7.1px;height:191.44px;background:#a5a5a5"></div>
<div class="a" style="left:972.19px;top:1108.87px;width:7.1px;height:127.63px;background:#a5a5a5"></div>
<div class="a" style="left:1021.40px;top:896.16px;width:7.1px;height:340.34px;background:#a5a5a5"></div>
<div class="a" style="left:1070.61px;top:704.71px;width:7.1px;height:531.79px;background:#a5a5a5"></div>
<div class="a" style="left:1119.82px;top:789.80px;width:7.1px;height:446.70px;background:#a5a5a5"></div>
<div class="a" style="left:1161.46px;top:885.52px;width:7.1px;height:350.98px;background:#e0824a"></div>
<div class="a" style="left:1210.67px;top:1130.14px;width:7.1px;height:106.36px;background:#e0824a"></div>
<div class="a" style="left:1275.01px;top:1023.79px;width:7.1px;height:212.71px;background:#f4c042"></div>
<div class="a" style="left:1324.22px;top:917.43px;width:7.1px;height:319.07px;background:#f4c042"></div>
<div class="a" style="left:1373.43px;top:577.09px;width:7.1px;height:659.41px;background:#f4c042"></div>
<div class="a" style="left:1430.21px;top:1023.79px;width:7.1px;height:212.71px;background:#6899d0"></div>
<div class="a" style="left:1479.42px;top:981.24px;width:7.1px;height:255.26px;background:#6899d0"></div>
<div class="a" style="left:1528.63px;top:959.97px;width:7.1px;height:276.53px;background:#6899d0"></div>
<div class="a" style="left:1577.83px;top:917.43px;width:7.1px;height:319.07px;background:#6899d0"></div>
<div class="a" style="left:1627.04px;top:938.70px;width:7.1px;height:297.80px;background:#6899d0"></div>
<div class="a" style="left:1676.25px;top:1023.79px;width:7.1px;height:212.71px;background:#6899d0"></div>
<div class="a" style="left:508.00px;top:492.00px;width:1.00px;height:852.00px;background:#000"></div>
<div class="a" style="left:502.00px;top:1236.00px;width:1188.00px;height:1.00px;background:#000"></div>
<div class="a" style="left:557.00px;top:1236.00px;width:1.00px;height:36.00px;background:#000"></div>
<div class="a" style="left:606.00px;top:1236.00px;width:1.00px;height:36.00px;background:#000"></div>
<div class="a" style="left:655.00px;top:1236.00px;width:1.00px;height:72.00px;background:#000"></div>
<div class="a" style="left:704.00px;top:1236.00px;width:1.00px;height:108.00px;background:#000"></div>
<div class="a" style="left:754.00px;top:1236.00px;width:1.00px;height:36.00px;background:#000"></div>
<div class="a" style="left:803.00px;top:1236.00px;width:1.00px;height:36.00px;background:#000"></div>
<div class="a" style="left:852.00px;top:1236.00px;width:1.00px;height:36.00px;background:#000"></div>
<div class="a" style="left:901.00px;top:1236.00px;width:1.00px;height:108.00px;background:#000"></div>
<div class="a" style="left:950.00px;top:1236.00px;width:1.00px;height:72.00px;background:#000"></div>
<div class="a" style="left:1000.00px;top:1236.00px;width:1.00px;height:72.00px;background:#000"></div>
<div class="a" style="left:1049.00px;top:1236.00px;width:1.00px;height:36.00px;background:#000"></div>
<div class="a" style="left:1098.00px;top:1236.00px;width:1.00px;height:36.00px;background:#000"></div>
<div class="a" style="left:1147.00px;top:1236.00px;width:1.00px;height:108.00px;background:#000"></div>
<div class="a" style="left:1196.00px;top:1236.00px;width:1.00px;height:36.00px;background:#000"></div>
<div class="a" style="left:1246.00px;top:1236.00px;width:1.00px;height:36.00px;background:#000"></div>
<div class="a" style="left:1295.00px;top:1236.00px;width:1.00px;height:72.00px;background:#000"></div>
<div class="a" style="left:1344.00px;top:1236.00px;width:1.00px;height:36.00px;background:#000"></div>
<div class="a" style="left:1393.00px;top:1236.00px;width:1.00px;height:108.00px;background:#000"></div>
<div class="a" style="left:1442.00px;top:1236.00px;width:1.00px;height:36.00px;background:#000"></div>
<div class="a" style="left:1492.00px;top:1236.00px;width:1.00px;height:36.00px;background:#000"></div>
<div class="a" style="left:1541.00px;top:1236.00px;width:1.00px;height:108.00px;background:#000"></div>
<div class="a" style="left:1590.00px;top:1236.00px;width:1.00px;height:36.00px;background:#000"></div>
<div class="a" style="left:1639.00px;top:1236.00px;width:1.00px;height:36.00px;background:#000"></div>
<div class="a" style="left:1689.00px;top:1236.00px;width:1.00px;height:108.00px;background:#000"></div>
<div class="c" style="left:472.60px;top:1249.07px;width:120px">1</div>
<div class="c" style="left:521.81px;top:1249.07px;width:120px">2</div>
<div class="c" style="left:571.02px;top:1249.07px;width:120px">4</div>
<div class="c" style="left:620.23px;top:1249.07px;width:120px">3</div>
<div class="c" style="left:669.44px;top:1249.07px;width:120px">1</div>
<div class="c" style="left:718.65px;top:1249.07px;width:120px">2</div>
<div class="c" style="left:767.85px;top:1249.07px;width:120px">3</div>
<div class="c" style="left:817.06px;top:1249.07px;width:120px">4</div>
<div class="c" style="left:866.27px;top:1249.07px;width:120px">3</div>
<div class="c" style="left:915.48px;top:1249.07px;width:120px">1</div>
<div class="c" style="left:964.69px;top:1249.07px;width:120px">1</div>
<div class="c" style="left:1013.90px;top:1249.07px;width:120px">2</div>
<div class="c" style="left:1063.10px;top:1249.07px;width:120px">4</div>
<div class="c" style="left:1112.31px;top:1249.07px;width:120px">1</div>
<div class="c" style="left:1161.52px;top:1249.07px;width:120px">2</div>
<div class="c" style="left:1210.73px;top:1249.07px;width:120px">3</div>
<div class="c" style="left:1259.94px;top:1249.07px;width:120px">3</div>
<div class="c" style="left:1309.15px;top:1249.07px;width:120px">4</div>
<div class="c" style="left:1358.35px;top:1249.07px;width:120px">1</div>
<div class="c" style="left:1407.56px;top:1249.07px;width:120px">2</div>
<div class="c" style="left:1456.77px;top:1249.07px;width:120px">3</div>
<div class="c" style="left:1505.98px;top:1249.07px;width:120px">1</div>
<div class="c" style="left:1555.19px;top:1249.07px;width:120px">2</div>
<div class="c" style="left:1604.40px;top:1249.07px;width:120px">3</div>
<div class="c" style="left:481.81px;top:1285.17px;width:200px">Maxilaku</div>
<div class="c" style="left:580.23px;top:1285.17px;width:200px">Chai</div>
<div class="c" style="left:703.25px;top:1285.17px;width:200px">Chang</div>
<div class="c" style="left:826.27px;top:1285.17px;width:200px">Maxilaku</div>
<div class="c" style="left:875.48px;top:1285.17px;width:200px">Chai</div>
<div class="c" style="left:973.90px;top:1285.17px;width:200px">Geitost</div>
<div class="c" style="left:1121.52px;top:1285.17px;width:200px">Ikuru</div>
<div class="c" style="left:1244.54px;top:1285.17px;width:200px">Ipoh Coffee</div>
<div class="c" style="left:1367.56px;top:1285.17px;width:200px">Chocolade</div>
<div class="c" style="left:1515.19px;top:1285.17px;width:200px">Chocolade</div>
<div class="c" style="left:506.42px;top:1321.27px;width:200px">David</div>
<div class="c" style="left:703.25px;top:1321.27px;width:200px">James</div>
<div class="c" style="left:924.69px;top:1321.27px;width:200px">Miya</div>
<div class="c" style="left:1170.73px;top:1321.27px;width:200px">Elvis</div>
<div class="c" style="left:1367.56px;top:1321.27px;width:200px">Jean</div>
<div class="c" style="left:1515.19px;top:1321.27px;width:200px">Ada</div>
<div class="a" style="left:1711px;top:825.5px;width:97px;height:173px;border:1.2px solid #000;background:#fff"></div>
<div class="a" style="left:1721px;top:839.0px;width:10px;height:10px;background:#4b72bd"></div>
<div class="t" style="left:1735.5px;top:835.68px;font-size:15.5px;color:#000">Asia</div>
<div class="a" style="left:1721px;top:873.5px;width:10px;height:10px;background:#e0824a"></div>
<div class="t" style="left:1735.5px;top:870.18px;font-size:15.5px;color:#000">Europe</div>
<div class="a" style="left:1721px;top:908.0px;width:10px;height:10px;background:#a5a5a5"></div>
<div class="t" style="left:1735.5px;top:904.68px;font-size:15.5px;color:#000">America</div>
<div class="a" style="left:1721px;top:942.0px;width:10px;height:10px;background:#f4c042"></div>
<div class="t" style="left:1735.5px;top:938.68px;font-size:15.5px;color:#000">Oceania</div>
<div class="a" style="left:1721px;top:976.0px;width:10px;height:10px;background:#6899d0"></div>
<div class="t" style="left:1735.5px;top:972.68px;font-size:15.5px;color:#000">Africa</div>
<div class="a" style="left:359.0px;top:459.0px;width:16px;height:16px;background:#fff;border:1.2px solid #8c8c8c;border-radius:2.5px;box-shadow:0 2px 4px rgba(0,0,0,0.13)"></div>
<div class="a" style="left:1087.0px;top:459.0px;width:16px;height:16px;background:#fff;border:1.2px solid #8c8c8c;border-radius:2.5px;box-shadow:0 2px 4px rgba(0,0,0,0.13)"></div>
<div class="a" style="left:1817.0px;top:459.0px;width:16px;height:16px;background:#fff;border:1.2px solid #8c8c8c;border-radius:2.5px;box-shadow:0 2px 4px rgba(0,0,0,0.13)"></div>
<div class="a" style="left:359.0px;top:903.0px;width:16px;height:16px;background:#fff;border:1.2px solid #8c8c8c;border-radius:2.5px;box-shadow:0 2px 4px rgba(0,0,0,0.13)"></div>
<div class="a" style="left:1817.0px;top:903.0px;width:16px;height:16px;background:#fff;border:1.2px solid #8c8c8c;border-radius:2.5px;box-shadow:0 2px 4px rgba(0,0,0,0.13)"></div>
<div class="a" style="left:359.0px;top:1351.0px;width:16px;height:16px;background:#fff;border:1.2px solid #8c8c8c;border-radius:2.5px;box-shadow:0 2px 4px rgba(0,0,0,0.13)"></div>
<div class="a" style="left:1087.0px;top:1351.0px;width:16px;height:16px;background:#fff;border:1.2px solid #8c8c8c;border-radius:2.5px;box-shadow:0 2px 4px rgba(0,0,0,0.13)"></div>
<div class="a" style="left:1817.0px;top:1351.0px;width:16px;height:16px;background:#fff;border:1.2px solid #8c8c8c;border-radius:2.5px;box-shadow:0 2px 4px rgba(0,0,0,0.13)"></div>
</body></html>
